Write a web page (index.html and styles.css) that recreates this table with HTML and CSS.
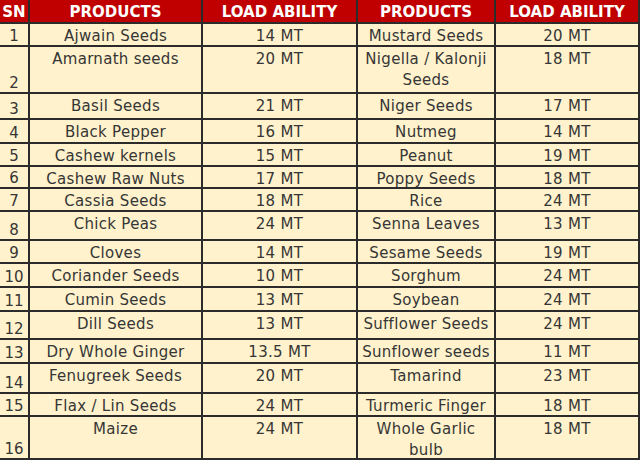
FILE: index.html
```html
<!DOCTYPE html>
<html>
<head>
<meta charset="utf-8">
<link rel="stylesheet" href="styles.css">
</head>
<body>
<div class="sheet">
  <div class="hd">SN</div><div class="hd">PRODUCTS</div><div class="hd">LOAD ABILITY</div><div class="hd">PRODUCTS</div><div class="hd">LOAD ABILITY</div>
  <div class="sn">1</div><div class="c">Ajwain Seeds</div><div class="c">14 MT</div><div class="c">Mustard Seeds</div><div class="c">20 MT</div>
  <div class="sn">2</div><div class="c">Amarnath seeds</div><div class="c">20 MT</div><div class="c">Nigella / Kalonji Seeds</div><div class="c">18 MT</div>
  <div class="sn">3</div><div class="c">Basil Seeds</div><div class="c">21 MT</div><div class="c">Niger Seeds</div><div class="c">17 MT</div>
  <div class="sn">4</div><div class="c">Black Pepper</div><div class="c">16 MT</div><div class="c">Nutmeg</div><div class="c">14 MT</div>
  <div class="sn">5</div><div class="c">Cashew kernels</div><div class="c">15 MT</div><div class="c">Peanut</div><div class="c">19 MT</div>
  <div class="sn">6</div><div class="c">Cashew Raw Nuts</div><div class="c">17 MT</div><div class="c">Poppy Seeds</div><div class="c">18 MT</div>
  <div class="sn">7</div><div class="c">Cassia Seeds</div><div class="c">18 MT</div><div class="c">Rice</div><div class="c">24 MT</div>
  <div class="sn">8</div><div class="c">Chick Peas</div><div class="c">24 MT</div><div class="c">Senna Leaves</div><div class="c">13 MT</div>
  <div class="sn">9</div><div class="c">Cloves</div><div class="c">14 MT</div><div class="c">Sesame Seeds</div><div class="c">19 MT</div>
  <div class="sn">10</div><div class="c">Coriander Seeds</div><div class="c">10 MT</div><div class="c">Sorghum</div><div class="c">24 MT</div>
  <div class="sn">11</div><div class="c">Cumin Seeds</div><div class="c">13 MT</div><div class="c">Soybean</div><div class="c">24 MT</div>
  <div class="sn">12</div><div class="c">Dill Seeds</div><div class="c">13 MT</div><div class="c">Sufflower Seeds</div><div class="c">24 MT</div>
  <div class="sn">13</div><div class="c">Dry Whole Ginger</div><div class="c">13.5 MT</div><div class="c">Sunflower seeds</div><div class="c">11 MT</div>
  <div class="sn">14</div><div class="c">Fenugreek Seeds</div><div class="c">20 MT</div><div class="c">Tamarind</div><div class="c">23 MT</div>
  <div class="sn">15</div><div class="c">Flax / Lin Seeds</div><div class="c">24 MT</div><div class="c">Turmeric Finger</div><div class="c">18 MT</div>
  <div class="sn">16</div><div class="c">Maize</div><div class="c">24 MT</div><div class="c">Whole Garlic bulb</div><div class="c">18 MT</div>
</div>
</body>
</html>
```
FILE: styles.css
```css
html, body {
  margin: 0;
  padding: 0;
  background: #ffffff;
}

.sheet {
  width: 640px;
  box-sizing: border-box;
  display: grid;
  grid-template-columns: 28px 171px 153px 136px 142px;
  grid-template-rows: 22px 21px 45px 24px 22px 21px 20px 21px 27px 21px 22px 22px 26px 22px 28px 21px 41px;
  gap: 2px;
  padding: 0 2px 2px 0;
  background: #2b2b2b;
  font-family: "DejaVu Sans", Verdana, sans-serif;
  font-size: 15px;
  line-height: 21px;
  color: #363636;
}

.hd {
  background: #c00000;
  color: #ffffff;
  font-weight: bold;
  display: flex;
  align-items: center;
  justify-content: center;
  text-align: center;
  white-space: nowrap;
  padding-top: 2px;
}

.sn {
  background: #fff2cc;
  display: flex;
  align-items: flex-end;
  justify-content: center;
  line-height: 17px;
}

.c {
  background: #fff2cc;
  text-align: center;
  padding: 2px 0 0;
  letter-spacing: 0.3px;
}
```
